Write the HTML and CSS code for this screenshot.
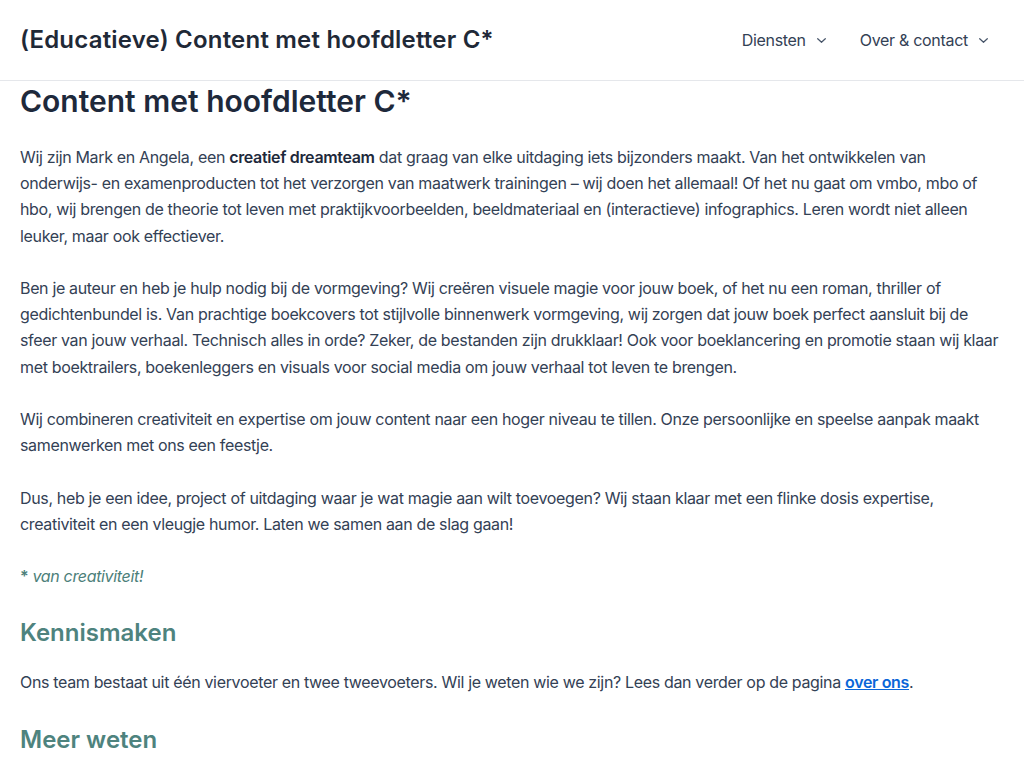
FILE: index.html
```html
<!DOCTYPE html>
<html lang="nl">
<head>
<meta charset="utf-8">
<title>Content met hoofdletter C*</title>
<link rel="stylesheet" href="styles.css">
</head>
<body>
<header class="site-header">
  <div class="site-title">(Educatieve) Content met hoofdletter C*</div>
  <nav class="main-nav">
    <a class="nav-item" href="#">Diensten <svg class="chev" viewBox="0 0 9 5" width="9" height="5"><path d="M0.7 0.7l3.8 3.6 3.8-3.6" fill="none" stroke="currentColor" stroke-width="1.2" stroke-linecap="round" stroke-linejoin="round"/></svg></a>
    <a class="nav-item" href="#">Over &amp; contact <svg class="chev" viewBox="0 0 9 5" width="9" height="5"><path d="M0.7 0.7l3.8 3.6 3.8-3.6" fill="none" stroke="currentColor" stroke-width="1.2" stroke-linecap="round" stroke-linejoin="round"/></svg></a>
  </nav>
</header>
<main class="content">
  <h1 class="page-title">Content met hoofdletter C*</h1>
  <p>Wij zijn Mark en Angela, een <strong>creatief dreamteam</strong> dat graag van elke uitdaging iets bijzonders maakt. Van het ontwikkelen van onderwijs- en examenproducten tot het verzorgen van maatwerk trainingen – wij doen het allemaal! Of het nu gaat om vmbo, mbo of hbo, wij brengen de theorie tot leven met praktijkvoorbeelden, beeldmateriaal en (interactieve) infographics. Leren wordt niet alleen leuker, maar ook effectiever.</p>
  <p>Ben je auteur en heb je hulp nodig bij de vormgeving? Wij creëren visuele magie voor jouw boek, of het nu een roman, thriller of gedichtenbundel is. Van prachtige boekcovers tot stijlvolle binnenwerk vormgeving, wij zorgen dat jouw boek perfect aansluit bij de sfeer van jouw verhaal. Technisch alles in orde? Zeker, de bestanden zijn drukklaar! Ook voor boeklancering en promotie staan wij klaar met boektrailers, boekenleggers en visuals voor social media om jouw verhaal tot leven te brengen.</p>
  <p>Wij combineren creativiteit en expertise om jouw content naar een hoger niveau te tillen. Onze persoonlijke en speelse aanpak maakt samenwerken met ons een feestje.</p>
  <p>Dus, heb je een idee, project of uitdaging waar je wat magie aan wilt toevoegen? Wij staan klaar met een flinke dosis expertise, creativiteit en een vleugje humor. Laten we samen aan de slag gaan!</p>
  <p class="note"><strong>*</strong> <em>van creativiteit!</em></p>
  <h2 class="section-title">Kennismaken</h2>
  <p>Ons team bestaat uit één viervoeter en twee tweevoeters. Wil je weten wie we zijn? Lees dan verder op de pagina <a class="link" href="#">over ons</a>.</p>
  <h2 class="section-title">Meer weten</h2>
</main>
</body>
</html>
```
FILE: styles.css
```css
* { box-sizing: border-box; }
html, body { margin: 0; padding: 0; background: #ffffff; }
body {
  font-family: Inter, "Noto Sans", sans-serif;
  font-size: 16px;
  line-height: 26.2px;
  color: #334155;
}
.site-header {
  height: 81px;
  border-bottom: 1px solid #e5e7eb;
  display: flex;
  align-items: center;
  justify-content: space-between;
  padding: 0 20px;
}
.site-title {
  font-size: 24px;
  font-weight: 600;
  color: #1f2937;
  line-height: 30px;
  letter-spacing: 0.2px;
}
.main-nav {
  display: flex;
  gap: 34px;
  padding-right: 16px;
}
.nav-item {
  color: #334155;
  text-decoration: none;
  font-size: 16px;
  letter-spacing: -0.3px;
  display: flex;
  align-items: center;
  gap: 11px;
}
.chev { color: #475569; margin-top: 2px; }
.content {
  padding: 0 20px;
}
.page-title {
  font-size: 30px;
  font-weight: 600;
  line-height: 36px;
  color: #1e293b;
  margin: 2px 0 25px;
}
.content p { margin: 0 0 26.2px; letter-spacing: -0.34px; }
.content strong { font-weight: 600; color: #1e293b; }
.note { color: #4d7f7a; }
.note strong { color: #4d7f7a; }
.section-title {
  font-size: 24px;
  font-weight: 600;
  line-height: 30px;
  color: #4e837e;
  margin: 29px 0 21px;
}
.link { color: #0a66d8; font-weight: 600; text-decoration: underline; }
```
